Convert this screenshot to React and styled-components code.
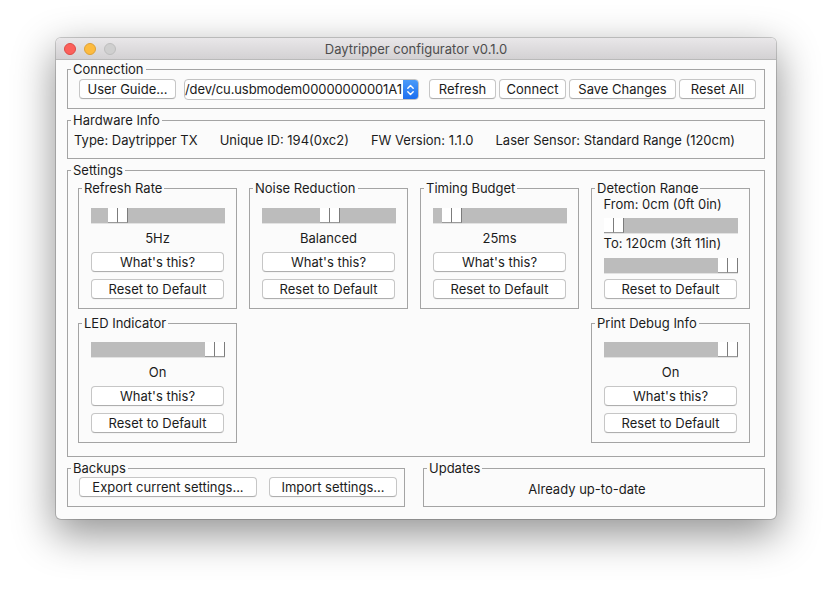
import React from "react";
import styled, { createGlobalStyle } from "styled-components";

const GlobalStyle = createGlobalStyle`
  html, body {
    margin: 0;
    background: #fff;
  }
  body {
    font-family: Inter, "Liberation Sans", sans-serif;
    font-size: 13px;
    color: #1b1b1b;
  }
`;

const Desktop = styled.div`
  min-height: 594px;
  box-sizing: border-box;
  padding: 38px 0 0 56px;
`;

const Window = styled.div`
  width: 720px;
  background: #fbfbfb;
  border-radius: 5px;
  overflow: hidden;
  box-shadow: 0 0 0 1px rgba(0, 0, 0, 0.18), 0 14px 40px 2px rgba(0, 0, 0, 0.42);
`;

const TitleBar = styled.div`
  height: 22px;
  box-sizing: border-box;
  display: grid;
  grid-template-columns: 1fr auto 1fr;
  align-items: center;
  background: linear-gradient(#e9e7e9, #d3d1d3);
  border-bottom: 1px solid #b9b9b9;
`;

const Lights = styled.div`
  display: flex;
  gap: 8px;
  padding-left: 8px;
`;

const Light = styled.span`
  width: 12px;
  height: 12px;
  box-sizing: border-box;
  border-radius: 50%;
  background: ${(p) => p.$bg};
  border: 1px solid ${(p) => p.$edge};
`;

const Title = styled.div`
  color: #4d4d4d;
  font-size: 13px;
`;

const Content = styled.div`
  display: flex;
  flex-direction: column;
  gap: 3px;
  padding: 1px 11px 12px;
`;

const Group = styled.fieldset`
  margin: 0;
  padding: 0;
  min-width: 0;
  border: 1px solid #a4a4a4;
`;

const Legend = styled.legend`
  margin-left: 3px;
  padding: 0 2px;
  font-size: 13px;
  line-height: 16px;
  clip-path: ${(p) => (p.$clipped ? "inset(0 0 3px 0)" : "none")};
`;

const Button = styled.button`
  flex: none;
  width: ${(p) => p.$w}px;
  height: 20px;
  margin-top: ${(p) => p.$mt || 0}px;
  box-sizing: border-box;
  padding: 0;
  background: #fff;
  border: 1px solid #c6c6c6;
  border-bottom-color: #aeaeae;
  border-radius: 4px;
  box-shadow: 0 0.5px 0.5px rgba(0, 0, 0, 0.06);
  font: inherit;
  font-size: 13px;
  line-height: 18px;
  color: #1b1b1b;
  white-space: nowrap;
`;

/* Connection */
const ConnectionRow = styled.div`
  display: flex;
  align-items: flex-start;
  gap: 3px;
  padding: 2px 8px 8px 11px;
`;

const Combo = styled.div`
  display: flex;
  width: 236px;
  height: 21px;
  box-sizing: border-box;
  margin: 0 7px 0 5px;
  background: #fff;
  border: 1px solid #c2c2c2;
  border-radius: 4px;
  overflow: hidden;
`;

const ComboText = styled.span`
  flex: 1;
  min-width: 0;
  overflow: hidden;
  white-space: nowrap;
  line-height: 19px;
  letter-spacing: -0.1px;
`;

const Stepper = styled.span`
  flex: none;
  width: 15px;
  display: flex;
  align-items: center;
  justify-content: center;
  background: linear-gradient(#4b9bf9, #1a6ef0);
`;

/* Hardware info */
const InfoRow = styled.div`
  display: flex;
  gap: 22px;
  padding: 4px 6px 10px;
  line-height: 16px;
  white-space: nowrap;
`;

/* Settings */
const SettingsGrid = styled.div`
  display: grid;
  grid-template-columns: repeat(4, 159px);
  column-gap: 12px;
  row-gap: 6px;
  padding: 2px 0 13px 10px;
`;

const Cell = styled(Group)`
  grid-column: ${(p) => p.$col || "auto"};
`;

const Panel = styled.div`
  display: flex;
  flex-direction: column;
  align-items: center;
  padding: ${(p) => p.$top}px 0 9px;
`;

const Track = styled.div`
  position: relative;
  flex: none;
  width: 134px;
  height: 16px;
  margin-top: ${(p) => p.$mt || 0}px;
  background: #bcbcbc;
  box-shadow: inset 0 -1px 0 #e2e2e2;
`;

const Thumb = styled.div`
  position: absolute;
  top: 0;
  width: 20px;
  height: 15px;
  display: flex;
  box-shadow: inset 1px 0 0 #d8d8d8;
`;

const ThumbHalf = styled.span`
  flex: 1;
  box-sizing: border-box;
  background: #fff;
  border-right: 1px solid #7c7c7c;
  border-bottom: 1px solid #9a9a9a;
`;

const Value = styled.div`
  width: 134px;
  margin-top: ${(p) => p.$mt || 0}px;
  line-height: 16px;
  text-align: ${(p) => (p.$left ? "left" : "center")};
  white-space: nowrap;
`;

/* Bottom */
const BottomRow = styled.div`
  display: grid;
  grid-template-columns: 338px 1fr;
  column-gap: 18px;
`;

const BackupRow = styled.div`
  display: flex;
  gap: 12px;
  padding: 1px 0 9px 11px;
`;

const UpdateText = styled.div`
  line-height: 16px;
  text-align: center;
  padding: 5px 14px 9px 0;
`;

const Slider = ({ pos, mt }) => (
  <Track $mt={mt}>
    <Thumb style={{ left: `${pos * 114}px` }}>
      <ThumbHalf />
      <ThumbHalf />
    </Thumb>
  </Track>
);

const Setting = ({ title, pos, value, col, top = 12 }) => (
  <Cell $col={col}>
    <Legend>{title}</Legend>
    <Panel $top={top}>
      <Slider pos={pos} />
      <Value $mt={6}>{value}</Value>
      <Button $w={133} $mt={6}>What's this?</Button>
      <Button $w={133} $mt={7}>Reset to Default</Button>
    </Panel>
  </Cell>
);

const ChevronPair = () => (
  <svg width="9" height="14" viewBox="0 0 9 14" fill="none" stroke="#fff" strokeWidth="1.4" strokeLinecap="round" strokeLinejoin="round">
    <path d="M1.8 5.2 L4.5 2.5 L7.2 5.2" />
    <path d="M1.8 8.8 L4.5 11.5 L7.2 8.8" />
  </svg>
);

export default function App() {
  return (
    <>
      <GlobalStyle />
      <Desktop>
        <Window>
          <TitleBar>
            <Lights>
              <Light $bg="#fc605b" $edge="#dd4b45" />
              <Light $bg="#fdbb3f" $edge="#dda137" />
              <Light $bg="#cfcfcf" $edge="#bdbdbd" />
            </Lights>
            <Title>Daytripper configurator v0.1.0</Title>
            <span />
          </TitleBar>

          <Content>
            <Group>
              <Legend>Connection</Legend>
              <ConnectionRow>
                <Button $w={97}>User Guide...</Button>
                <Combo>
                  <ComboText>/dev/cu.usbmodem00000000001A1</ComboText>
                  <Stepper>
                    <ChevronPair />
                  </Stepper>
                </Combo>
                <Button $w={67}>Refresh</Button>
                <Button $w={67}>Connect</Button>
                <Button $w={107}>Save Changes</Button>
                <Button $w={77}>Reset All</Button>
              </ConnectionRow>
            </Group>

            <Group>
              <Legend>Hardware Info</Legend>
              <InfoRow>
                <span>Type: Daytripper TX</span>
                <span>Unique ID: 194(0xc2)</span>
                <span>FW Version: 1.1.0</span>
                <span>Laser Sensor: Standard Range (120cm)</span>
              </InfoRow>
            </Group>

            <Group>
              <Legend>Settings</Legend>
              <SettingsGrid>
                <Setting title="Refresh Rate" pos={0.15} value="5Hz" />
                <Setting title="Noise Reduction" pos={0.51} value="Balanced" />
                <Setting title="Timing Budget" pos={0.08} value="25ms" />
                <Cell>
                  <Legend $clipped>Detection Range</Legend>
                  <Panel $top={0}>
                    <Value $left>From: 0cm (0ft 0in)</Value>
                    <Slider pos={0} mt={6} />
                    <Value $left $mt={1}>To: 120cm (3ft 11in)</Value>
                    <Slider pos={1} mt={7} />
                    <Button $w={133} $mt={5}>Reset to Default</Button>
                  </Panel>
                </Cell>
                <Setting title="LED Indicator" pos={1} value="On" top={11} />
                <Setting title="Print Debug Info" pos={1} value="On" col={4} top={11} />
              </SettingsGrid>
            </Group>

            <BottomRow>
              <Group>
                <Legend>Backups</Legend>
                <BackupRow>
                  <Button $w={178}>Export current settings...</Button>
                  <Button $w={128}>Import settings...</Button>
                </BackupRow>
              </Group>
              <Group>
                <Legend>Updates</Legend>
                <UpdateText>Already up-to-date</UpdateText>
              </Group>
            </BottomRow>
          </Content>
        </Window>
      </Desktop>
    </>
  );
}
